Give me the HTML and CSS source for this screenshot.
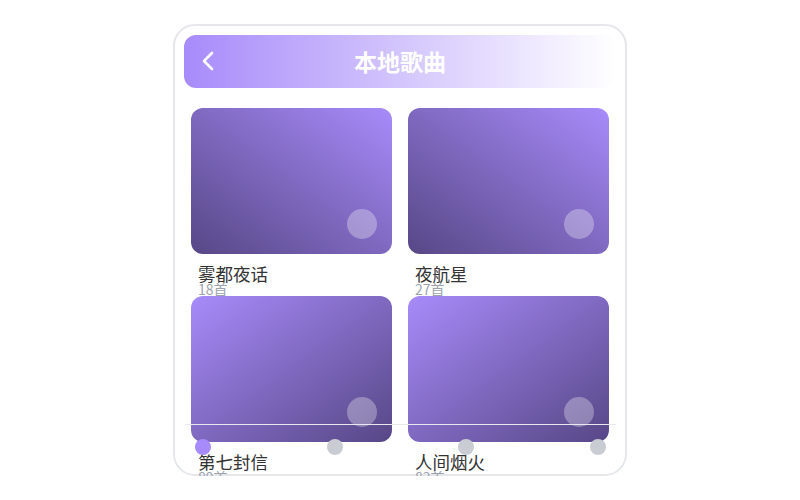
FILE: index.html
```html
<!DOCTYPE html>
<html lang="zh-CN">
<head>
  <meta charset="UTF-8" />
  <meta name="viewport" content="width=device-width, initial-scale=1.0"/>
  <title>本地歌曲</title>
  <link rel="stylesheet" href="styles.css">
</head>
<body>

  <div class="phone">
    <!-- header bar -->
    <div class="header">
      <svg class="back" width="14" height="22" viewBox="0 0 14 22">
        <polyline points="11,3 3,11 11,19" fill="none" stroke="#fff" stroke-width="2.6" stroke-linecap="round" stroke-linejoin="round"/>
      </svg>
      <h1>本地歌曲</h1>
    </div>

    <div class="grid">
      <div class="album">
        <div class="cover cover-up"><span class="play"></span></div>
        <div class="name">雾都夜话</div>
        <div class="count">18首</div>
      </div>
      <div class="album">
        <div class="cover cover-up"><span class="play"></span></div>
        <div class="name">夜航星</div>
        <div class="count">27首</div>
      </div>
      <div class="album">
        <div class="cover cover-down"><span class="play"></span></div>
        <div class="name">第七封信</div>
        <div class="count">89首</div>
      </div>
      <div class="album">
        <div class="cover cover-down"><span class="play"></span></div>
        <div class="name">人间烟火</div>
        <div class="count">82首</div>
      </div>
    </div>

    <!-- slider track over the list -->
    <div class="track">
      <div class="line"></div>
      <div class="dots">
        <span class="dot active"></span>
        <span class="dot"></span>
        <span class="dot"></span>
        <span class="dot"></span>
      </div>
    </div>
  </div>

</body>
</html>
```

FILE: styles.css
```css
body {
  margin: 0;
  padding-top: 24px;
  background: #fff;
  font-family: "Noto Sans CJK SC", "Noto Sans", sans-serif;
  display: flex;
  justify-content: center;
}
.phone {
  position: relative;
  width: 454px;
  height: 452px;
  border: 2px solid #e5e7eb;
  border-radius: 22px;
  padding: 9px;
  box-sizing: border-box;
}
.header {
  position: relative;
  height: 53px;
  border-radius: 12px;
  background: linear-gradient(to right, #a78bfa, #ffffff);
  display: flex;
  align-items: center;
  justify-content: center;
}
.header .back {
  position: absolute;
  left: 17px;
  top: 15px;
}
.header h1 {
  margin: 0;
  color: #fff;
  font-size: 23px;
  font-weight: bold;
  line-height: 1;
}
.grid {
  display: grid;
  grid-template-columns: 201px 201px;
  column-gap: 16px;
  padding: 20px 7px 0;
}
.cover {
  position: relative;
  height: 146px;
  border-radius: 12px;
}
.cover-up {
  background: linear-gradient(to top right, #574786, #a78bfa);
}
.cover-down {
  background: linear-gradient(to bottom right, #a78bfa, #574786);
}
.play {
  position: absolute;
  right: 15px;
  bottom: 15px;
  width: 30px;
  height: 30px;
  border-radius: 50%;
  background: rgba(255, 255, 255, 0.3);
}
.name {
  margin-top: 10px;
  padding-left: 7px;
  font-size: 17.5px;
  line-height: 19px;
  color: #333;
}
.count {
  padding-left: 7px;
  font-size: 14px;
  line-height: 13px;
  color: #9ca3af;
}
.track {
  position: absolute;
  left: 10px;
  right: 9px;
  top: 398px;
}
.line {
  height: 1px;
  background: #e8e8ee;
}
.dots {
  display: flex;
  justify-content: space-between;
  padding: 14px 10px 0;
}
.dot {
  width: 16px;
  height: 16px;
  border-radius: 50%;
  background: #c9cdd3;
}
.dot.active {
  background: #a78bfa;
}
```
